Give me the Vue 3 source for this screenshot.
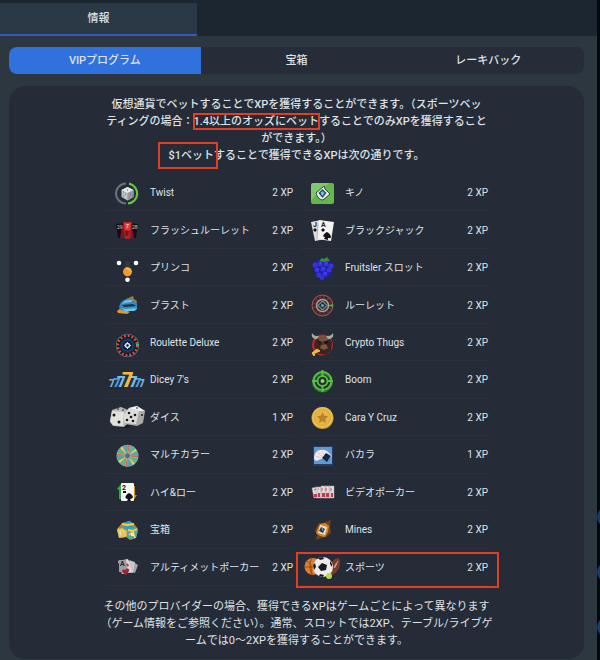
<template>
  <div class="page">
    <main class="content">
      <header class="top-tabs">
        <button class="top-tab">情報</button>
      </header>

      <nav class="segments">
        <button
          v-for="tab in tabs"
          :key="tab"
          class="segment"
          :class="{ active: tab === activeTab }"
          @click="activeTab = tab">
          {{ tab }}
        </button>
      </nav>

      <section class="panel">
        <p class="intro">
          仮想通貨でベットすることでXPを獲得することができます。（スポーツベッ<br>
          ティングの場合：<span class="marked">1.4以上のオッズにベット</span>することでのみXPを獲得すること<br>
          ができます。）<br>
          <span class="marked marked-wide">$1ベット</span>することで獲得できるXPは次の通りです。
        </p>

        <ul class="games">
          <li v-for="game in games" :key="game.icon" class="game" :class="{ boxed: game.boxed }">
            <svg class="game-icon" viewBox="0 0 36 30" aria-hidden="true"><use :href="'#' + game.icon" /></svg>
            <span class="game-name">{{ game.name }}</span>
            <span class="game-xp">{{ game.xp }} XP</span>
          </li>
        </ul>

        <p class="note">
          その他のプロバイダーの場合、獲得できるXPはゲームごとによって異なります<br>
          （ゲーム情報をご参照ください）。通常、スロットでは2XP、テーブル/ライブゲ<br>
          ームでは0〜2XPを獲得することができます。
        </p>
      </section>
    </main>

    <aside class="edge">
      <i class="edge-dot"></i>
      <i class="edge-dot"></i>
      <i class="edge-dot"></i>
    </aside>

    <!-- Game icons -->
    <svg class="sprite" aria-hidden="true">
      <symbol id="twist" viewBox="0 0 36 30">
        <path d="M17 5.500A10 10 0 0 0 17 25.500" fill="none" stroke="#66717e" stroke-width="2" />
        <path d="M20 5.700A10 10 0 0 1 19 25.500" fill="none" stroke="#66c63d" stroke-width="2.200" />
        <path d="M18.500 9l6 3v7l-6 3.500-6-3.500v-7z" fill="#bfc3c5" />
        <path d="M18.500 9l6 3-6 3-6-3z" fill="#e6e8e8" />
        <path d="M18.500 15v7.500l6-3.500v-7z" fill="#92989c" />
        <path d="M14 14h1m1 2h1m-3 2h1m6-2h1m1 2h1m-6-6h1" stroke="#5e666c" />
      </symbol>

      <symbol id="flash" viewBox="0 0 36 30">
        <path d="M7 9l8-1-1 15H9z" fill="#150d12" />
        <path d="M29 9l-8-1 1 15h5z" fill="#150d12" />
        <path d="M13 12l2-3v14h-4zM23 12l-2-3v14h4z" fill="#7c171d" />
        <path d="M14 7h9l-2 17h-5z" fill="#b51f25" />
        <path d="M15 8h7l-1 7h-5z" fill="#e53936" />
        <text x="8" y="14" font-size="5" fill="#d8d1d3">29</text>
        <text x="17" y="13" font-size="5" fill="#fff">7</text>
        <text x="23" y="14" font-size="5" fill="#d8d1d3">28</text>
        <path d="M16 16h4l-1 5h-2z" fill="#801018" />
      </symbol>

      <symbol id="plinko" viewBox="0 0 36 30">
        <path d="M16 8h5v9h-5z" fill="#303740" />
        <circle cx="10" cy="10" r="2.300" fill="#fff" />
        <circle cx="27" cy="10" r="2.300" fill="#fff" />
        <circle cx="18.500" cy="18.700" r="4.500" fill="#f39a2c" />
        <path d="M17 15l3 1 2 3" fill="none" stroke="#ffb64d" stroke-width="1.500" />
        <circle cx="18.500" cy="26.700" r="2.300" fill="#fff" />
      </symbol>

      <symbol id="blast" viewBox="0 0 36 30">
        <path d="M17 9l7-3 1 3 3 2-1 5-6-1z" fill="#a97a33" />
        <path d="M8 21l4-3 9 4-3 2-9-1z" fill="#d89a32" />
        <path d="M10 18c1-7 6-10 13-9l5 5v5l-2 2-10 0-4-1z" fill="#3688bd" />
        <path d="M13 14c2-4 6-5 11-4l-2 2-6 1zM12 18l4 1 12-1-3 3-9 0z" fill="#6bc5ed" />
        <path d="M13 15l11-1 3 2-12 1z" fill="#12324b" />
      </symbol>

      <symbol id="roulette-deluxe" viewBox="0 0 36 30">
        <circle cx="18.500" cy="17.500" r="11.500" fill="#7d848c" />
        <circle cx="18.500" cy="17.500" r="11" fill="#15151b" />
        <circle cx="18.500" cy="17.500" r="9.700" fill="none" stroke="#d34c40" stroke-width="2.600" stroke-dasharray="2 1.800" />
        <circle cx="18.500" cy="17.500" r="8" fill="#142b4b" />
        <circle cx="18.500" cy="17.500" r="5.500" fill="#0c1c32" stroke="#2c547b" />
        <path d="M27 16l3 0v2h-3z" fill="#34b672" />
        <circle cx="18.500" cy="17.500" r="2" fill="none" stroke="#d4dfea" stroke-width="1.500" />
        <path d="M18.500 14v2m0 3v2m-3.500-3.500h2m3 0h2" stroke="#d4dfea" />
      </symbol>

      <symbol id="dicey" viewBox="0 0 36 30">
        <g font-family="Roboto, sans-serif" font-weight="900">
          <text x="0" y="22" font-size="10" fill="#6db6e8">7</text>
          <text x="4" y="22" font-size="13" fill="#4f9bd4">7</text>
          <text x="8" y="22" font-size="15" fill="#74bdec">7</text>
          <text x="30" y="22" font-size="10" fill="#6db6e8">7</text>
          <text x="25" y="22" font-size="13" fill="#4f9bd4">7</text>
          <text x="20" y="22" font-size="15" fill="#74bdec">7</text>
          <text x="13" y="22" font-size="20" fill="#f4b83f">7</text>
        </g>
      </symbol>

      <symbol id="dice" viewBox="0 0 36 30">
        <path d="M2 21l2 4 14 1 6-4 7 1 3-5z" fill="#171c22" />
        <path d="M3 8l9-3 7 3-1 14-3 3-11-1-3-4z" fill="#b8b8b7" />
        <path d="M3 9l12 1-1 14-10-1-3-4z" fill="#e1e1df" />
        <path d="M20 6l8-2 8 5-2 12-6 3-12-2-2-8z" fill="#aaa" />
        <path d="M20 6l10 3-3 13-11-1-2-7z" fill="#dcdcda" />
        <path d="M20 6l8-2 8 5-6 0z" fill="#f3f3f1" />
        <g fill="#17191c">
          <circle cx="5" cy="13" r="1.500" /><circle cx="10" cy="20" r="1.500" />
          <circle cx="20" cy="11" r="1.300" /><circle cx="26" cy="13" r="1.300" />
          <circle cx="22" cy="15" r="1.300" /><circle cx="18" cy="18" r="1.300" />
          <circle cx="24" cy="19" r="1.300" /><circle cx="33" cy="13" r="1" />
        </g>
        <path d="M8 7h2m3 1h2m12-2h2" stroke="#252729" />
      </symbol>

      <symbol id="multicolor" viewBox="0 0 36 30">
        <circle cx="18.500" cy="15.800" r="11" fill="#8e9ba5" />
        <circle cx="18.500" cy="15.800" r="7" fill="none" stroke="#57a5a8" stroke-width="7" />
        <circle cx="18.500" cy="15.800" r="7" fill="none" stroke="#e5cc58" stroke-width="7" stroke-dasharray="1.800 3.698" />
        <circle cx="18.500" cy="15.800" r="7" fill="none" stroke="#dc5952" stroke-width="7" stroke-dasharray="1.400 9.596" />
        <circle cx="18.500" cy="15.800" r="7" fill="none" stroke="#6abd65" stroke-width="7" stroke-dasharray="1.500 9.496" stroke-dashoffset="-3" />
        <circle cx="18.500" cy="15.800" r="3" fill="#596b7c" stroke="#a9b0ad" />
      </symbol>

      <symbol id="hilo" viewBox="0 0 36 30">
        <path d="M8 12l4-5 4 5-2 1v9h-4v-9z" fill="#38a844" />
        <path d="M28 18l-4 6-4-6h2v-9h4v9z" fill="#cc9227" />
        <rect x="12" y="6" width="13" height="18" rx="1" fill="#f5f5f2" />
        <text x="13" y="13" font-size="7" font-weight="700" fill="#16191d">2</text>
        <path d="M14 14h3v2h-3zM20 16c-5 3-4 6-1 6l-1 2h4l-1-2c3 0 5-3-1-6z" fill="#121518" />
      </symbol>

      <symbol id="chest" viewBox="0 0 36 30">
        <path d="M8 14l5-6 8-2 5 4 3 4-2 9-6 2-4-3-7 1z" fill="#a88735" />
        <path d="M14 8l6-2 5 3-1 6-9-1z" fill="#3c9eb4" />
        <path d="M8 15l5-2 5 3-1 6-7 1z" fill="#ddc26a" />
        <path d="M19 14l6-1 4 3-2 7-7 1-2-5z" fill="#4ba9b5" />
        <path d="M13 9l5 1 7-1M9 14l5 2 3 5M19 15l5 1 4-2M20 20l4-3 2 6" fill="none" stroke="#f1cc57" stroke-width="1.800" />
        <path d="M10 17l2-1v5zM22 18h3v3h-3z" fill="#e5e8cd" />
      </symbol>

      <symbol id="ultimate" viewBox="0 0 36 30">
        <path d="M21 8l8 5-3 8-9-3z" fill="#a7a3a9" />
        <path d="M18 8l8 2-2 11-9-1z" fill="#c8c5c8" />
        <path d="M9 9l10-2 4 13-10 2z" fill="#dcd9dc" />
        <path d="M10 8l7 0 2 13-9-1z" fill="#9b9da4" />
        <path d="M16 18c2-3 5-1 4 1l-3 4-4-3c0-3 2-3 3-2z" fill="#a6222b" />
        <text x="11" y="14" font-size="7" font-weight="700" fill="#23262b">A</text>
        <path d="M18 11l2 2-1 2-2-2z" fill="#c63a43" />
      </symbol>

      <symbol id="keno" viewBox="0 0 36 30">
        <rect x="7" y="5" width="23" height="21" rx="2" fill="#65b64b" />
        <path d="M9 5h16L7 22V7z" fill="#7fc86a" />
        <path d="M20 8l-8 7c1 4 4 7 7 7l7-6-5-5z" fill="#e8edee" stroke="#33413b" />
        <path d="M18.500 11l4 4-4 5-4-5z" fill="#204c68" />
        <path d="M18.500 13l2 2-2 3-2-3z" fill="#75c3d9" />
      </symbol>

      <symbol id="blackjack" viewBox="0 0 36 30">
        <path d="M7 7l10-2 4 19-10 2z" fill="#dedfdf" />
        <path d="M15 5l15 2-3 19-14-2z" fill="#f3f3f2" />
        <text x="9" y="12" font-size="7" font-weight="700" fill="#1b1d20">J</text>
        <text x="17" y="12" font-size="7" font-weight="700" fill="#1b1d20">A</text>
        <path d="M11 13l2 2-2 2-2-2zM19 13l2 2-2 2-2-2zM23 17c-4 2-5 5-2 5l-1 2 4 1v-2c5 1 3-4-1-6z" fill="#111419" />
        <path d="M14 8l-1 16" stroke="#b4b7b9" />
      </symbol>

      <symbol id="fruit" viewBox="0 0 36 30">
        <path d="M9 10l5-3h12l3 4-2 12-7 3-7-1-3-8z" fill="#1e20a1" />
        <g fill="#3834db">
          <circle cx="11" cy="12" r="2.500" /><circle cx="16" cy="11" r="2.500" />
          <circle cx="22" cy="11" r="2.500" /><circle cx="27" cy="13" r="2.500" />
          <circle cx="13" cy="17" r="2.500" /><circle cx="19" cy="16" r="2.500" />
          <circle cx="25" cy="17" r="2.500" /><circle cx="15" cy="22" r="2.500" />
          <circle cx="21" cy="21" r="2.500" /><circle cx="18" cy="25" r="2" />
        </g>
        <path d="M16 10h1m5 0h1m-4 5h1m-7 1h1m7 4h1" stroke="#6f64f1" />
        <path d="M15 8l3-3 2 1 3-2 3 4-6 1z" fill="#348d37" />
      </symbol>

      <symbol id="roulette" viewBox="0 0 36 30">
        <circle cx="18.500" cy="15.500" r="10.500" fill="#652f30" stroke="#9f5952" />
        <circle cx="18.500" cy="15.500" r="8" fill="none" stroke="#33282c" stroke-width="2.500" stroke-dasharray="2 2" />
        <circle cx="18.500" cy="15.500" r="6" fill="#343639" stroke="#a4a19a" stroke-width="1.500" />
        <path d="M18.500 11l4.500 4.500-4.500 4.500-4.500-4.500z" fill="#1e3440" stroke="#afb6b7" />
        <circle cx="18.500" cy="15.500" r="1.500" fill="#789bad" />
        <path d="M25 15l4-1v3l-4-1z" fill="#55a551" />
      </symbol>

      <symbol id="thugs" viewBox="0 0 36 30">
        <circle cx="18.500" cy="17" r="9.500" fill="#571b20" stroke="#be292b" stroke-width="2" />
        <path d="M12 25l1-13 4-4 7 1 4 5-1 9-5 4z" fill="#372521" />
        <path d="M14 9l4-2 6 2 1 4-5 3-5-3z" fill="#79513a" />
        <path d="M13 11c-4 0-6-2-5-6 2 3 4 3 7 3zM24 11c4 0 6-2 5-6-2 3-4 3-7 3z" fill="#a8aaa2" />
        <path d="M13 12l5 2 7-2-1 3-3 1-2-2-3 1z" fill="#14171b" />
        <path d="M17 17l5-1 2 4-4 2-4-2z" fill="#805443" />
        <path d="M8 25l5-4 3 2-5 2-1 3z" fill="#f2bd39" stroke="#f2bd39" />
      </symbol>

      <symbol id="boom" viewBox="0 0 36 30">
        <circle cx="18.500" cy="17" r="9" fill="none" stroke="#2b742c" stroke-width="3" />
        <circle cx="18.500" cy="16" r="9" fill="none" stroke="#58bd42" stroke-width="2" />
        <circle cx="18.500" cy="16" r="5" fill="none" stroke="#58bd42" stroke-width="2" />
        <path d="M18.500 5v6m0 10v6M8 16h6m9 0h6" stroke="#58bd42" stroke-width="2" />
        <circle cx="18.500" cy="16" r="2" fill="#7be05a" />
      </symbol>

      <symbol id="coin" viewBox="0 0 36 30">
        <circle cx="18.500" cy="16" r="11" fill="#d4972f" />
        <circle cx="18.500" cy="15.500" r="10.500" fill="#eabd51" />
        <circle cx="18.500" cy="15.500" r="8" fill="#e7b546" stroke="#d9a83c" />
        <path d="M18.500 10l1.700 3.700 4 .500-3 2.800.800 4-3.500-2-3.500 2 .800-4-3-2.800 4-.500z" fill="#ba802a" />
      </symbol>

      <symbol id="baccarat" viewBox="0 0 36 30">
        <rect x="9" y="6" width="20" height="20" rx="1" fill="#253d61" />
        <rect x="10" y="7" width="18" height="17" fill="#5d9ad5" />
        <path d="M10 19c0-9 7-11 13-8l5 5-5 5-3-3-8 3z" fill="#f0e8ec" />
        <path d="M12 16l5 2m-3-6l4 5m0-6l2 4" stroke="#dfc3cc" />
        <path d="M22 13l5 3-4 6-5-4z" fill="#152840" />
      </symbol>

      <symbol id="video-poker" viewBox="0 0 36 30">
        <path d="M8 11l5-1 1 10-4 1zM12 10h5v11h-5zM17 9h5v12h-5zM21 9h5v12h-5zM25 9h5v12h-5z" fill="#e3dcdd" stroke="#aaa0a5" stroke-width=".5" />
        <path d="M10 17h3v3h-3zM14 16h2v4h-2zM18 16h3v4h-3zM22 16h3v4h-3zM27 16h2v4h-2z" fill="#b83e49" />
        <path d="M10 13l2-1m2 0h1m3-1v3m4-3v3m5-3v3" stroke="#c45762" />
      </symbol>

      <symbol id="mines" viewBox="0 0 36 30">
        <path d="M15 8l4 0 8-3-1 6 1 7-5 4-5 1-5 2 1-5-2-5z" fill="#70411d" />
        <path d="M16 9l5-1 4 3-1 6-3 5-5-1-4-3 2-5z" fill="#d68529" />
        <path d="M16 10l7 2-2 8-7-2z" fill="#e6dfca" />
        <path d="M17 12l4 2-2 4-4-2z" fill="#233c55" />
        <path d="M18 13l1 3" stroke="#799bb3" />
      </symbol>

      <symbol id="sports" viewBox="0 0 36 30">
        <circle cx="9" cy="14.500" r="8.500" fill="#dd7f2c" />
        <path d="M1 15h12M8 6c-3 5-3 12 1 17M3 9c4 2 6 8 4 13" fill="none" stroke="#7d4519" stroke-width=".8" />
        <path d="M26 23c-1-9 2-17 9-17 3 7-1 16-9 17z" fill="#7c3b28" />
        <path d="M30 16l4-7m-3 3l2 1m-3 1l2 1" stroke="#d8c4b5" stroke-width=".8" />
        <circle cx="19" cy="15" r="10" fill="#ececea" />
        <path d="M18 11l5 2-1 5-5 1-3-4zM14 6l5-1 1 2-4 1zM9 13l2-2 1 4-2 3zM16 22l4 1-1 2-4-1zM26 9l2 3 0 3-2-3z" fill="#181b1f" />
        <circle cx="25" cy="24" r="3" fill="#bdd948" />
      </symbol>
    </svg>
  </div>
</template>

<script setup>
import { ref } from 'vue'

const tabs = ['VIPプログラム', '宝箱', 'レーキバック']
const activeTab = ref(tabs[0])

const games = [
  { name: 'Twist', xp: 2, icon: 'twist' },
  { name: 'キノ', xp: 2, icon: 'keno' },
  { name: 'フラッシュルーレット', xp: 2, icon: 'flash' },
  { name: 'ブラックジャック', xp: 2, icon: 'blackjack' },
  { name: 'プリンコ', xp: 2, icon: 'plinko' },
  { name: 'Fruitsler スロット', xp: 2, icon: 'fruit' },
  { name: 'ブラスト', xp: 2, icon: 'blast' },
  { name: 'ルーレット', xp: 2, icon: 'roulette' },
  { name: 'Roulette Deluxe', xp: 2, icon: 'roulette-deluxe' },
  { name: 'Crypto Thugs', xp: 2, icon: 'thugs' },
  { name: "Dicey 7's", xp: 2, icon: 'dicey' },
  { name: 'Boom', xp: 2, icon: 'boom' },
  { name: 'ダイス', xp: 1, icon: 'dice' },
  { name: 'Cara Y Cruz', xp: 2, icon: 'coin' },
  { name: 'マルチカラー', xp: 2, icon: 'multicolor' },
  { name: 'バカラ', xp: 1, icon: 'baccarat' },
  { name: 'ハイ&ロー', xp: 2, icon: 'hilo' },
  { name: 'ビデオポーカー', xp: 2, icon: 'video-poker' },
  { name: '宝箱', xp: 2, icon: 'chest' },
  { name: 'Mines', xp: 2, icon: 'mines' },
  { name: 'アルティメットポーカー', xp: 2, icon: 'ultimate' },
  { name: 'スポーツ', xp: 2, icon: 'sports', boxed: true }
]
</script>

<style>
body {
  background: #2d3740;
}
</style>

<style scoped>
.page {
  display: flex;
  min-height: 100vh;
  background: #2d3740;
  color: #dfe2e6;
  font-family: Roboto, "Noto Sans CJK JP", sans-serif;
  font-size: 11px;
  line-height: 17px;
}

.content {
  flex: 1;
  min-width: 0;
}

button {
  border: none;
  padding: 0;
  color: inherit;
  font: inherit;
  font-weight: 500;
  cursor: pointer;
}

/* Top tabs */
.top-tabs {
  padding-top: 3px;
  background: #1c2630;
}

.top-tab {
  display: block;
  width: 33%;
  height: 33px;
  background: #2b3846;
  border-bottom: 2px solid #2e5cb8;
}

/* Segmented control */
.segments {
  display: grid;
  grid-template-columns: repeat(3, 1fr);
  margin: 11px 13px 12px 9px;
  border-radius: 8px;
  overflow: hidden;
  background: #262d39;
}

.segment {
  height: 27px;
  background: transparent;
}

.segment.active {
  background: #3071dd;
}

/* Panel */
.panel {
  margin: 0 13px 1px 9px;
  padding: 10px 0;
  border-radius: 16px;
  background: #252c38;
}

.intro,
.note {
  margin: 0;
  text-align: center;
  white-space: nowrap;
}

.intro {
  font-weight: 500;
}

.marked {
  position: relative;
}

.marked::after,
.boxed::after {
  content: "";
  position: absolute;
  border: 2px solid #e03e26;
}

.marked::after {
  inset: -2px -1px;
}

.marked-wide::after {
  inset: -7px -4px -7px -11px;
}

/* Game list */
.games {
  display: grid;
  grid-template-columns: 188px 188px;
  justify-content: center;
  column-gap: 7px;
  min-height: 412px;
  margin: 10px 0 12px;
  padding: 0;
  list-style: none;
  font-size: 10px;
}

.game {
  position: relative;
  display: flex;
  align-items: center;
  gap: 5px;
  padding-left: 4px;
  box-shadow: inset 0 -1px #28313d;
  white-space: nowrap;
}

.game-icon {
  flex-shrink: 0;
  width: 36px;
  height: 30px;
}

.game-name {
  flex: 1;
}

.boxed::after {
  inset: 3px -11px -2px -4px;
}

.sprite {
  position: absolute;
  width: 0;
  height: 0;
}

/* Neighbouring page strip */
.edge {
  display: flex;
  flex-direction: column;
  justify-content: flex-end;
  gap: 35px;
  width: 3px;
  padding-bottom: 23px;
  box-sizing: border-box;
  overflow: hidden;
  background: #05090e;
}

.edge-dot {
  flex-shrink: 0;
  width: 20px;
  height: 20px;
  border-radius: 50%;
  background: #173a70;
}
</style>
